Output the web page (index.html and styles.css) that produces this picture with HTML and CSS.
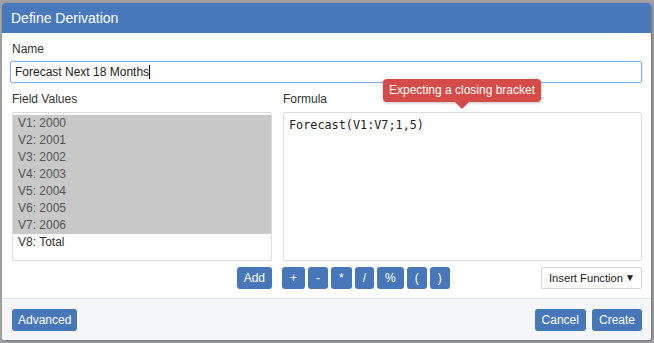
FILE: index.html
```html
<!DOCTYPE html>
<html>
<head>
<meta charset="utf-8">
<link rel="stylesheet" href="styles.css">
</head>
<body>
<div class="backdrop">
  <div class="dialog">
    <div class="dialog-header">Define Derivation</div>
    <div class="dialog-body">
      <div class="label name-label">Name</div>
      <div class="name-input">Forecast Next 18 Months<span class="caret"></span></div>
      <div class="columns">
        <div class="col col-left">
          <div class="label">Field Values</div>
          <div class="box list">
            <div class="item sel">V1: 2000</div>
            <div class="item sel">V2: 2001</div>
            <div class="item sel">V3: 2002</div>
            <div class="item sel">V4: 2003</div>
            <div class="item sel">V5: 2004</div>
            <div class="item sel">V6: 2005</div>
            <div class="item sel">V7: 2006</div>
            <div class="item">V8: Total</div>
          </div>
          <div class="row row-left">
            <button class="btn">Add</button>
          </div>
        </div>
        <div class="col col-right">
          <div class="label">Formula</div>
          <div class="tooltip">Expecting a closing bracket</div>
          <div class="box formula">Forecast(V1:V7;1,5)</div>
          <div class="row row-right">
            <div class="ops">
              <button class="btn op">+</button>
              <button class="btn op">-</button>
              <button class="btn op">*</button>
              <button class="btn op">/</button>
              <button class="btn op">%</button>
              <button class="btn op">(</button>
              <button class="btn op">)</button>
            </div>
            <div class="select"><span class="select-text">Insert Function</span><span class="arrow">▼</span></div>
          </div>
        </div>
      </div>
    </div>
    <div class="dialog-footer">
      <button class="btn fbtn adv">Advanced</button>
      <div class="footer-right">
        <button class="btn fbtn">Cancel</button>
        <button class="btn fbtn">Create</button>
      </div>
    </div>
  </div>
</div>
</body>
</html>
```
FILE: styles.css
```css
html, body {
  margin: 0;
  padding: 0;
}
body {
  width: 654px;
  height: 343px;
  overflow: hidden;
  background: #a3a3a3;
  font-family: "Liberation Sans", Arial, sans-serif;
  font-size: 12px;
  color: #333;
}
.backdrop {
  padding: 3px 0 0 2px;
}
.dialog {
  width: 649px;
  height: 337px;
  background: #fff;
  border-radius: 3px;
  overflow: hidden;
  box-shadow: 1px 1px 3px rgba(0,0,0,0.35);
  display: flex;
  flex-direction: column;
}
.dialog-header {
  height: 30px;
  line-height: 30px;
  background: #4879bc;
  color: #fff;
  font-size: 14px;
  padding-left: 9px;
}
.dialog-body {
  padding: 9px 9px 0 10px;
  flex: 1;
}
.label {
  line-height: 14px;
  height: 14px;
  color: #333;
}
.name-input {
  margin: 5px 0 0 -2px;
  height: 20px;
  line-height: 20px;
  border: 1px solid #84aee8;
  border-radius: 2px;
  padding-left: 4px;
  color: #222;
  box-shadow: 0 0 2px rgba(102,160,233,0.5);
}
.caret {
  display: inline-block;
  width: 1px;
  height: 14px;
  background: #000;
  vertical-align: -3px;
}
.columns {
  display: flex;
  gap: 11px;
  margin-top: 9px;
}
.col {
  display: flex;
  flex-direction: column;
}
.col-left {
  width: 260px;
}
.col-right {
  width: 359px;
  position: relative;
}
.box {
  margin-top: 6px;
  border: 1px solid #dcdcdc;
  border-radius: 2px;
  background: #fff;
  box-sizing: border-box;
  height: 149px;
}
.list {
  padding-top: 2px;
}
.item {
  height: 17px;
  line-height: 17px;
  padding-left: 5px;
  color: #333;
}
.item.sel {
  background: #c8c8c8;
  color: #555;
}
.formula {
  padding: 4px 5px;
  font-family: "DejaVu Sans Mono", "Liberation Mono", monospace;
  font-size: 11.8px;
  line-height: 17px;
  color: #222;
}
.tooltip {
  position: absolute;
  left: 100px;
  top: -13px;
  width: 158px;
  height: 23px;
  line-height: 22px;
  text-align: center;
  background: #d54b48;
  color: #fff;
  border-radius: 4px;
  box-shadow: 0 1px 3px rgba(0,0,0,0.25);
  font-size: 12px;
}
.tooltip::after {
  content: "";
  position: absolute;
  left: 72px;
  top: 23px;
  border-left: 7px solid transparent;
  border-right: 7px solid transparent;
  border-top: 7px solid #d54b48;
}
.row {
  display: flex;
  margin-top: 6px;
  height: 22px;
}
.row-left {
  justify-content: flex-end;
}
.row-right {
  justify-content: space-between;
  margin-left: -1px;
}
.ops {
  display: flex;
  gap: 3px;
}
.btn {
  font-family: "Liberation Sans", Arial, sans-serif;
  font-size: 12px;
  color: #fff;
  background: #4777b8;
  border: none;
  border-radius: 3px;
  height: 22px;
  padding: 0 7px;
  margin: 0;
  line-height: 22px;
}
.op {
  padding: 0 8px;
}
.select {
  width: 101px;
  height: 22px;
  box-sizing: border-box;
  line-height: 20px;
  border: 1px solid #d6d6d6;
  border-radius: 2px;
  color: #222;
  display: flex;
  justify-content: space-between;
  padding: 0 6px 0 7px;
  white-space: nowrap;
}
.select-text {
  font-size: 11.2px;
}
.arrow {
  font-size: 10px;
}
.dialog-footer {
  height: 41px;
  border-top: 1px solid #e4e7ef;
  background: #f5f6fa;
  display: flex;
  justify-content: space-between;
  align-items: center;
  padding: 0 9px 0 10px;
}
.footer-right {
  display: flex;
  gap: 6px;
}
.fbtn {
  padding: 0 7px;
}
.fbtn.adv {
  padding: 0 6px;
}
```
